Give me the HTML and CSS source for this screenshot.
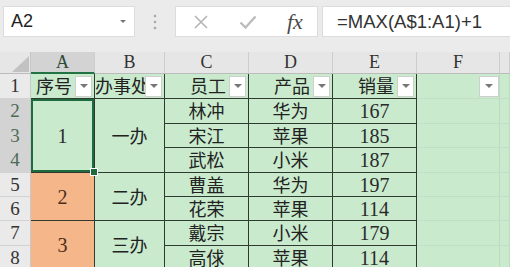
FILE: index.html
```html
<!DOCTYPE html>
<html lang="zh-CN">
<head>
  <meta charset="UTF-8" />
  <title>销量表</title>
  <link rel="stylesheet" href="styles.css">
</head>
<body>
  <!-- Formula bar -->
  <div class="toolbar">
    <div class="name-box">
      <span>A2</span>
      <span class="drop"></span>
    </div>
    <div class="grip">
      <svg width="4" height="18" viewBox="0 0 4 18"><circle cx="2" cy="3" r="1.3"/><circle cx="2" cy="9" r="1.3"/><circle cx="2" cy="15" r="1.3"/></svg>
    </div>
    <div class="fx-buttons">
      <svg class="icon" width="16" height="16" viewBox="0 0 16 16"><path d="M2 2 L14 14 M14 2 L2 14" stroke="#b4b4b4" stroke-width="1.6" fill="none"/></svg>
      <svg class="icon" width="18" height="16" viewBox="0 0 18 16"><path d="M1.5 8.5 L6.5 13.5 L16.5 2.5" stroke="#bcbcbc" stroke-width="2.4" fill="none"/></svg>
      <i class="fx">fx</i>
    </div>
    <div class="formula">=MAX(A$1:A1)+1</div>
  </div>

  <!-- Sheet -->
  <div class="sheet">
    <div class="corner">
      <svg width="31" height="22" viewBox="0 0 31 22"><polygon points="29,4 29,20 12,20" fill="#c2c2c2"/></svg>
    </div>
    <div class="col-head selected">A</div>
    <div class="col-head">B</div>
    <div class="col-head">C</div>
    <div class="col-head">D</div>
    <div class="col-head">E</div>
    <div class="col-head">F</div>
    <div class="col-head"></div>

    <!-- Row 1 -->
    <div class="row-head">1</div>
    <div class="cell title"><span class="label">序号</span><span class="filter"></span></div>
    <div class="cell title"><span class="label">办事处</span><span class="filter"></span></div>
    <div class="cell title"><span class="label">员工</span><span class="filter"></span></div>
    <div class="cell title"><span class="label">产品</span><span class="filter"></span></div>
    <div class="cell title"><span class="label">销量</span><span class="filter"></span></div>
    <div class="cell blank end"><span class="filter wide"></span></div>
    <div class="cell blank"></div>

    <!-- Row 2 -->
    <div class="row-head selected">2</div>
    <div class="cell num merge-3 active">1</div>
    <div class="cell merge-3">一办</div>
    <div class="cell">林冲</div>
    <div class="cell">华为</div>
    <div class="cell num">167</div>
    <div class="cell blank"></div>
    <div class="cell blank"></div>

    <!-- Row 3 -->
    <div class="row-head selected">3</div>
    <div class="cell">宋江</div>
    <div class="cell">苹果</div>
    <div class="cell num">185</div>
    <div class="cell blank"></div>
    <div class="cell blank"></div>

    <!-- Row 4 -->
    <div class="row-head selected">4</div>
    <div class="cell">武松</div>
    <div class="cell">小米</div>
    <div class="cell num">187</div>
    <div class="cell blank"></div>
    <div class="cell blank"></div>

    <!-- Row 5 -->
    <div class="row-head">5</div>
    <div class="cell num merge-2 orange">2</div>
    <div class="cell merge-2">二办</div>
    <div class="cell">曹盖</div>
    <div class="cell">华为</div>
    <div class="cell num">197</div>
    <div class="cell blank"></div>
    <div class="cell blank"></div>

    <!-- Row 6 -->
    <div class="row-head">6</div>
    <div class="cell">花荣</div>
    <div class="cell">苹果</div>
    <div class="cell num">114</div>
    <div class="cell blank"></div>
    <div class="cell blank"></div>

    <!-- Row 7 -->
    <div class="row-head">7</div>
    <div class="cell num merge-2 orange">3</div>
    <div class="cell merge-2">三办</div>
    <div class="cell">戴宗</div>
    <div class="cell">小米</div>
    <div class="cell num">179</div>
    <div class="cell blank"></div>
    <div class="cell blank"></div>

    <!-- Row 8 -->
    <div class="row-head">8</div>
    <div class="cell">高俅</div>
    <div class="cell">苹果</div>
    <div class="cell num">114</div>
    <div class="cell blank"></div>
    <div class="cell blank"></div>
  </div>
</body>
</html>
```

FILE: styles.css
```css
/* Reset */
* {
  margin: 0;
  padding: 0;
  box-sizing: border-box;
}
body {
  width: 510px;
  height: 267px;
  overflow: hidden;
  background-color: #ebebeb;
  font-family: "Noto Sans CJK SC", sans-serif;
  color: #222;
}
/* Formula bar */
.toolbar {
  height: 52px;
  display: flex;
  align-items: flex-start;
  padding-top: 6px;
  background-color: #ebebeb;
}
.name-box {
  width: 132px;
  height: 31px;
  margin-left: 3px;
  background-color: #fff;
  border: 1px solid #dcdcdc;
  display: flex;
  align-items: center;
  justify-content: space-between;
  padding: 0 8px 0 7px;
  font-family: "Liberation Sans", sans-serif;
  font-size: 18px;
  color: #222;
}
.drop {
  width: 0;
  height: 0;
  border-left: 3px solid transparent;
  border-right: 3px solid transparent;
  border-top: 3px solid #777;
}
.grip {
  width: 40px;
  height: 31px;
  display: flex;
  align-items: center;
  justify-content: center;
  fill: #a8a8a8;
}
.fx-buttons {
  width: 143px;
  height: 31px;
  background-color: #fff;
  border: 1px solid #dcdcdc;
  display: flex;
  align-items: center;
  padding-left: 17px;
}
.fx-buttons .icon:first-child {
  margin-right: 30px;
}
.fx {
  margin-left: 30px;
  font-family: "Liberation Serif", serif;
  font-size: 22px;
  color: #4a4a4a;
}
.formula {
  flex: 1;
  height: 31px;
  margin-left: 4px;
  background-color: #fff;
  border: 1px solid #dcdcdc;
  border-right: none;
  display: flex;
  align-items: center;
  padding-left: 14px;
  font-family: "Liberation Sans", sans-serif;
  font-size: 18.5px;
  color: #333;
}
/* Sheet grid */
.sheet {
  display: grid;
  grid-template-columns: 31px 64px 70px 84px 84px 84px 83px 1fr;
  grid-template-rows: 22px 25px 25px 24px 25px 24px 24px 25px 24px;
  background-color: #c9eacd;
}
.corner {
  background-color: #e6e6e6;
  border-right: 1px solid #c8c8c8;
  border-bottom: 1px solid #bcbcbc;
}
.corner svg {
  display: block;
}
.col-head {
  background-color: #e6e6e6;
  border-right: 1px solid #cdcdcd;
  border-bottom: 1px solid #bcbcbc;
  display: flex;
  align-items: center;
  justify-content: center;
  font-family: "Liberation Serif", serif;
  font-size: 18px;
  color: #333;
}
.col-head.selected {
  background-color: #d3d3d3;
  border-bottom: 2px solid #217346;
  color: #2c4a36;
}
.row-head {
  background-color: #eaeaea;
  border-right: 1px solid #c8c8c8;
  border-bottom: 1px solid #d2d2d2;
  display: flex;
  align-items: center;
  justify-content: center;
  font-family: "Liberation Serif", serif;
  font-size: 19px;
  color: #333;
}
.row-head.selected {
  background-color: #d3d3d3;
  color: #4c6a55;
}
.cell {
  min-width: 0;
  border-right: 1px solid #2f3a31;
  border-bottom: 1px solid #2f3a31;
  display: flex;
  align-items: center;
  justify-content: center;
  font-size: 18px;
  line-height: 1.2;
  white-space: nowrap;
}
.num {
  font-family: "Liberation Serif", serif;
  font-size: 20px;
  color: #2a2a2a;
}
.merge-3 {
  grid-row: span 3;
}
.merge-2 {
  grid-row: span 2;
}
.orange {
  background-color: #f5b68a;
  color: #4a2e1c;
}
.active {
  position: relative;
  z-index: 2;
  box-shadow: inset 0 0 0 2px #1f6b40;
}
.active::after {
  content: "";
  position: absolute;
  right: -4px;
  bottom: -4px;
  width: 6px;
  height: 6px;
  background-color: #1f6b40;
  border: 1px solid #fff;
}
/* Header cells with filter buttons: the button sits over any text that runs too long */
.title {
  justify-content: safe flex-end;
  padding-right: 2px;
  gap: 3px;
}
.label {
  min-width: 0;
  text-align: right;
}
.filter {
  flex-shrink: 0;
  width: 17px;
  height: 21px;
  background-color: #fff;
  border: 1px solid #cfcfcf;
  display: flex;
  align-items: center;
  justify-content: center;
  position: relative;
}
.filter::before {
  content: "";
  width: 0;
  height: 0;
  border-left: 4px solid transparent;
  border-right: 4px solid transparent;
  border-top: 4px solid #777;
}
.filter.wide {
  width: 20px;
  height: 21px;
}
.blank {
  border-right: 1px solid #bcdcc0;
  border-bottom: 1px solid #c0dfc4;
}
.end {
  justify-content: flex-end;
}
```
